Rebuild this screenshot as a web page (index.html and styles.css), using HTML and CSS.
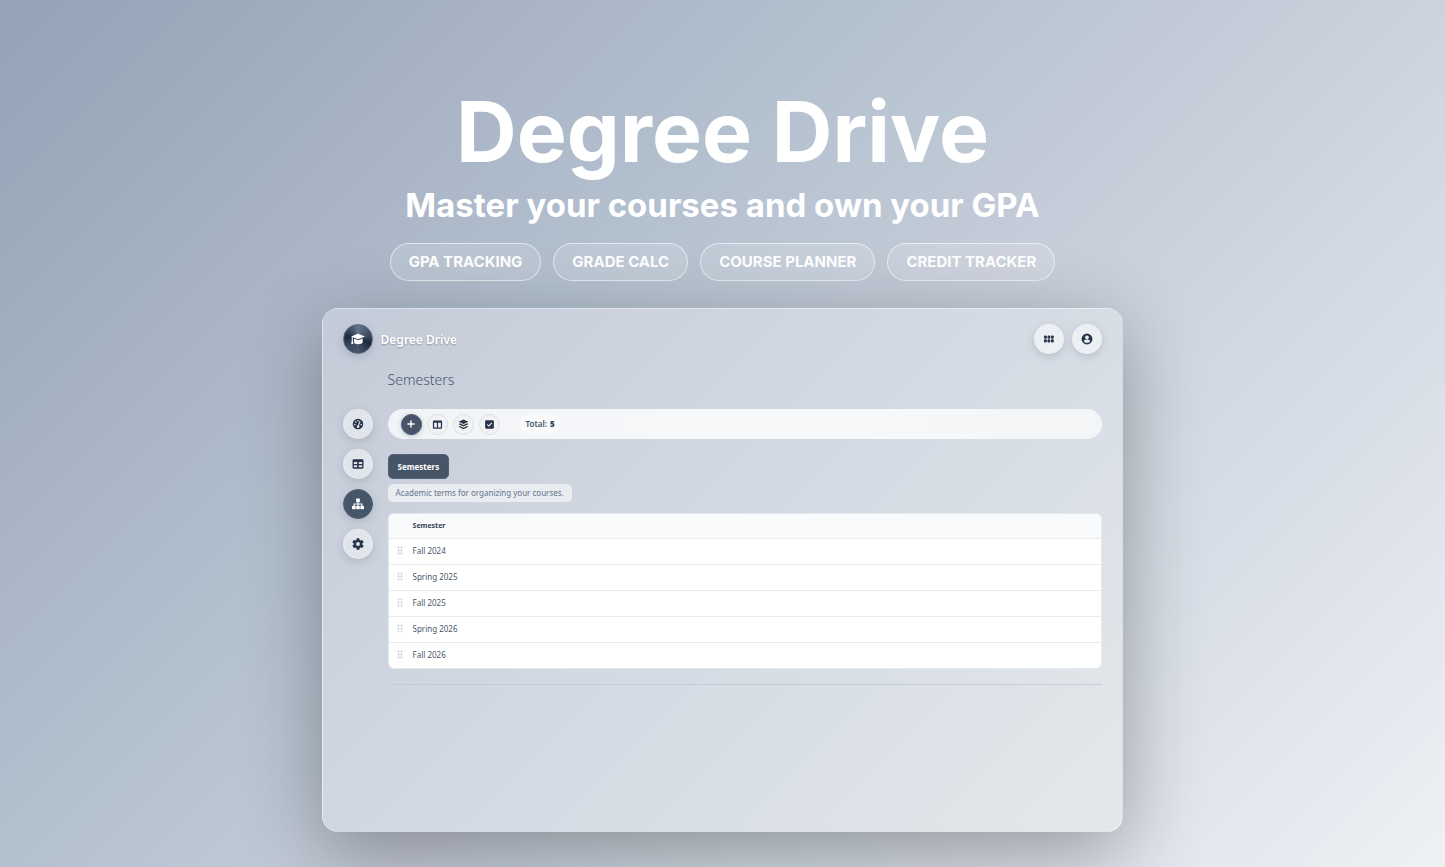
FILE: index.html
```html
<!DOCTYPE html>
<html lang="en">
<head>
<meta charset="utf-8">
<meta name="viewport" content="width=device-width, initial-scale=1">
<title>Degree Drive</title>
<link rel="stylesheet" href="styles.css">
</head>
<body>
<header class="hero">
  <h1 class="hero-title">Degree Drive</h1>
  <p class="hero-tagline">Master your courses and own your GPA</p>
  <ul class="features">
    <li class="feature">GPA TRACKING</li>
    <li class="feature">GRADE CALC</li>
    <li class="feature">COURSE PLANNER</li>
    <li class="feature">CREDIT TRACKER</li>
  </ul>
</header>
<main class="app">
  <div class="topbar">
    <a class="brand" href="#">
      <span class="logo"><svg viewBox="0 0 24 24" width="16" height="16" fill="currentColor"><path d="M12 4 1.500 8.200 12 12.400l10.500-4.200z"/><path d="M6 11.200V17c0 1.800 3 3 6 3s7-1.200 7-3v-5.800l-7 2.800z"/><path d="M2.600 9h1.600v6l1 4.500H1.800l.8-4.500z"/></svg></span>
      <span class="brand-name">Degree Drive</span>
    </a>
    <div class="top-actions">
      <button class="round" type="button" aria-label="Apps"><svg viewBox="0 0 10 8" width="10" height="8" fill="currentColor"><rect width="2.800" height="3.200" y=".6" rx="1"/><rect x="3.500" y=".6" width="2.800" height="3.200" rx="1"/><rect x="7" y=".6" width="2.800" height="3.200" rx="1"/><rect y="4.300" width="2.800" height="3.200" rx="1"/><rect x="3.500" y="4.300" width="2.800" height="3.200" rx="1"/><rect x="7" y="4.300" width="2.800" height="3.200" rx="1"/></svg></button>
      <button class="round" type="button" aria-label="Account"><svg viewBox="1 1 22 22" width="12" height="12" fill="currentColor"><path fill-rule="evenodd" d="M12 2a10 10 0 1 0 0 20 10 10 0 0 0 0-20zm0 3.500a3.500 3.500 0 1 1 0 7 3.500 3.500 0 0 1 0-7zM12 19c-2.500 0-4.700-1.200-6-3.100.1-2 4-3 6-3s5.900 1 6 3A7.200 7.200 0 0 1 12 19z"/></svg></button>
    </div>
  </div>
  <div class="workspace">
    <h2 class="page-title">Semesters</h2>
    <nav class="side" aria-label="Main">
      <a class="round" href="#" aria-label="Dashboard"><svg viewBox="0 0 24 24" width="12" height="12"><circle cx="12" cy="12" r="10.500" fill="currentColor"/><g fill="#e3e7ed"><circle cx="5.500" cy="13" r="1.600"/><circle cx="7.500" cy="8" r="1.600"/><circle cx="12" cy="5.500" r="1.600"/><circle cx="18.500" cy="13" r="1.600"/><path d="m15 6 2 .8-3 8.200a2.700 2.700 0 1 1-2-.7z"/></g></svg></a>
      <a class="round" href="#" aria-label="Courses"><svg viewBox="1 1 22 22" width="12" height="12" fill="currentColor"><path fill-rule="evenodd" d="M4 3.500h16a2 2 0 0 1 2 2v13a2 2 0 0 1-2 2H4a2 2 0 0 1-2-2v-13a2 2 0 0 1 2-2zM4.500 8.500v3.500h6v-3.500zm9 0v3.500h6v-3.500zm-9 6v3.500h6v-3.500zm9 0v3.500h6v-3.500z"/></svg></a>
      <a class="round is-active" href="#" aria-label="Semesters" aria-current="page"><svg viewBox="0 0 24 22" width="14" height="12" fill="currentColor"><rect x="8.500" y="1" width="7" height="7" rx="1.500"/><path d="M11 7h2v3h7v5h-2v-3h-5v3h-2v-3H6v3H4v-5h7z"/><rect x="1" y="14" width="6.800" height="6.800" rx="1.500"/><rect x="8.600" y="14" width="6.800" height="6.800" rx="1.500"/><rect x="16.200" y="14" width="6.800" height="6.800" rx="1.500"/></svg></a>
      <a class="round" href="#" aria-label="Settings"><svg viewBox="2 2 20 20" width="12" height="12" fill="currentColor"><path d="M19.140 12.940c.04-.3.06-.61.06-.94s-.02-.64-.07-.94l2.030-1.580a.5.5 0 0 0 .12-.61l-1.920-3.320a.5.5 0 0 0-.59-.22l-2.390.96a7 7 0 0 0-1.620-.94l-.36-2.540a.5.5 0 0 0-.48-.41h-3.840a.5.5 0 0 0-.47.41l-.36 2.540a7.400 7.400 0 0 0-1.620.94l-2.390-.96a.5.5 0 0 0-.59.220L2.740 8.870a.5.5 0 0 0 .12.610l2.030 1.580a6 6 0 0 0 0 1.880l-2.030 1.580a.5.5 0 0 0-.12.610l1.920 3.320c.12.220.37.290.59.220l2.390-.96c.5.380 1.030.700 1.620.940l.36 2.540c.05.240.24.410.48.410h3.840c.24 0 .44-.17.470-.41l.36-2.540a7.400 7.400 0 0 0 1.620-.94l2.390.96c.22.080.47 0 .59-.22l1.920-3.320a.5.5 0 0 0-.12-.61zM12 15.200a3.200 3.200 0 1 1 0-6.400 3.200 3.200 0 0 1 0 6.400z"/></svg></a>
    </nav>
    <div class="content">
      <div class="toolbar">
        <button class="tool is-primary" type="button" aria-label="Add"><svg viewBox="0 0 10 10" width="8" height="8"><path d="M5 .5v9M.5 5h9" stroke="currentColor" stroke-width="1.800"/></svg></button>
        <button class="tool" type="button" aria-label="Columns"><svg viewBox="0 0 24 24" width="11" height="11" fill="currentColor"><path fill-rule="evenodd" d="M4 3h16a2 2 0 0 1 2 2v14a2 2 0 0 1-2 2H4a2 2 0 0 1-2-2V5a2 2 0 0 1 2-2zm.7 5v10.300h6V8zm8.600 0v10.300h6V8z"/></svg></button>
        <button class="tool" type="button" aria-label="Layers"><svg viewBox="0 0 24 24" width="11" height="11" fill="currentColor"><path d="m12 1 10.500 5L12 11 1.500 6z"/><path d="m4 9.500 8 3.700 8-3.700 2.500 1.700-10.500 5-10.500-5z"/><path d="m4 15.300 8 3.700 8-3.700 2.500 1.700L12 22.500 1.500 17z"/></svg></button>
        <button class="tool" type="button" aria-label="Select"><svg viewBox="0 0 24 24" width="11" height="11"><rect x="2.500" y="2.500" width="19" height="19" rx="2.500" fill="currentColor"/><path d="m7 12 3.500 3.500 6.500-7" stroke="#fff" stroke-width="2.200" fill="none"/></svg></button>
        <p class="total">Total: <b>5</b></p>
      </div>
      <button class="tab" type="button">Semesters</button>
      <p class="hint">Academic terms for organizing your courses.</p>
      <div class="table-card">
        <table class="terms">
          <thead><tr><th class="grip-cell"></th><th scope="col">Semester</th></tr></thead>
          <tbody>
            <tr><td class="grip-cell"><span class="grip"></span></td><td>Fall 2024</td></tr>
            <tr><td class="grip-cell"><span class="grip"></span></td><td>Spring 2025</td></tr>
            <tr><td class="grip-cell"><span class="grip"></span></td><td>Fall 2025</td></tr>
            <tr><td class="grip-cell"><span class="grip"></span></td><td>Spring 2026</td></tr>
            <tr><td class="grip-cell"><span class="grip"></span></td><td>Fall 2026</td></tr>
          </tbody>
        </table>
      </div>
      <hr class="rule">
    </div>
  </div>
</main>
</body>
</html>
```
FILE: styles.css
```css
* { box-sizing: border-box; }

body {
  margin: 0;
  min-height: 100vh;
  padding: 84px 24px 35px;
  display: flex;
  flex-direction: column;
  align-items: center;
  overflow-x: hidden;
  background: linear-gradient(135deg, #94a3b8 0%, #9caabc 10%, #a8b4c5 22%, #b3c0ce 37%, #bcc7d4 46%, #c5cbd8 54%, #d0d8e1 68%, #e1e5ed 86%, #eef1f4 100%);
  font-family: "Segoe UI", "Noto Sans", "Open Sans", sans-serif;
  color: #475569;
}

h1, h2, p, ul { margin: 0; padding: 0; }

.hero {
  display: flex;
  flex-direction: column;
  align-items: center;
  font-family: "Century Gothic", Inter, sans-serif;
  font-weight: 700;
  color: #fff;
  text-align: center;
}
.hero-title { font-size: 84px; line-height: 96px; }
.hero-tagline { font-size: 33px; line-height: 50px; }
.features {
  display: flex;
  flex-wrap: wrap;
  justify-content: center;
  gap: 12px;
  margin-top: 13px;
  list-style: none;
}
.feature {
  padding: 0 18px;
  border: 1px solid rgba(255, 255, 255, .6);
  border-radius: 19px;
  background: rgba(255, 255, 255, .15);
  font-size: 15px;
  line-height: 36px;
}

.app {
  flex: 1;
  width: 57.400%;
  min-width: 480px;
  margin-top: 27px;
  padding: 15px 20px 24px;
  border: 1px solid rgba(255, 255, 255, .25);
  border-radius: 16px;
  background: linear-gradient(135deg, #c4cbd8 0%, #ccd3de 25%, #d3dae3 50%, #dce1e8 74%, #e5e8ea 100%);
  box-shadow: 0 22px 80px rgba(0, 0, 0, .32);
}

.topbar, .brand, .top-actions { display: flex; align-items: center; }
.topbar { justify-content: space-between; }
.brand { gap: 8px; color: #fff; text-decoration: none; }
.brand-name { font-size: 12px; font-weight: 600; text-shadow: 0 1px 2px rgba(0, 0, 0, .3); }
.top-actions { gap: 8px; }
.logo, .round {
  display: grid;
  place-items: center;
  width: 30px;
  height: 30px;
  padding: 0;
  border: 1px solid rgba(255, 255, 255, .2);
  border-radius: 50%;
  box-shadow: 0 3px 8px rgba(51, 65, 85, .18);
}
.logo {
  border-color: #56657b;
  background: conic-gradient(#64748b, #3b4a60 20%, #1e293b 30%, #475569 50%, #3b4a60 65%, #1e293b 78%, #64748b);
  color: #fff;
}
.round { background: rgba(255, 255, 255, .45); color: #273449; }
.top-actions .round { background: #eceff3; }
.round.is-active { background: #475569; border-color: #526077; color: #fff; }

.workspace {
  display: grid;
  grid-template-columns: 30px minmax(0, 1fr);
  column-gap: 15px;
}
.page-title {
  grid-column: 2;
  margin: 13px 0 17px;
  font-size: 14px;
  font-weight: 300;
  line-height: 25px;
}
.side { display: flex; flex-direction: column; gap: 10px; }

.toolbar {
  display: flex;
  align-items: center;
  gap: 5px;
  height: 30px;
  padding: 0 13px;
  border-radius: 15px;
  background: linear-gradient(90deg, #f1f3f7, #f8f9fa 50%, #f3f5f7);
}
.tool {
  display: grid;
  place-items: center;
  width: 21px;
  height: 21px;
  padding: 0;
  border: 1px solid #dcdfe3;
  border-radius: 50%;
  background: #f0f2f4;
  color: #273449;
}
.tool.is-primary { border-color: #475569; background: #475569; color: #fff; box-shadow: 0 1px 4px rgba(51, 65, 85, .3); }
.total {
  margin-left: 14px;
  padding: 0 7px;
  border-radius: 9px;
  background: #f9fafb;
  font-size: 8px;
  font-weight: 600;
  line-height: 18px;
}
.total b { margin-left: 1px; color: #334155; }
.tab {
  display: block;
  height: 25px;
  margin-top: 15px;
  padding: 0 9px;
  border: 1px solid #526077;
  border-radius: 5px;
  background: #475569;
  color: #fff;
  font-family: inherit;
  font-size: 8px;
  font-weight: 700;
}
.hint {
  width: fit-content;
  margin-top: 5px;
  padding: 0 8px;
  border-radius: 5px;
  background: #e9ecf0;
  color: #64748b;
  font-size: 8px;
  line-height: 18px;
}
.table-card {
  margin-top: 11px;
  border: 1px solid #e5e9ee;
  border-radius: 6px;
  overflow: hidden;
  background: #fff;
}
.terms { width: 100%; border-collapse: collapse; font-size: 8px; line-height: 12px; text-align: left; }
.terms th { height: 24px; padding: 0; background: #f8fafc; color: #334155; font-size: 7px; font-weight: 700; }
.terms td { height: 26px; padding: 0; border-top: 1px solid #e8eaee; }
.terms .grip-cell { width: 24px; padding: 0 0 2px 8px; }
.grip {
  display: block;
  width: 6px;
  height: 9px;
  background: radial-gradient(circle, #dfe3e8 50%, transparent 60%) 0 0 / 3px 3px;
}
.rule { height: 1px; margin: 15px 0 0; border: 0; background: #c6ccd6; }
```
